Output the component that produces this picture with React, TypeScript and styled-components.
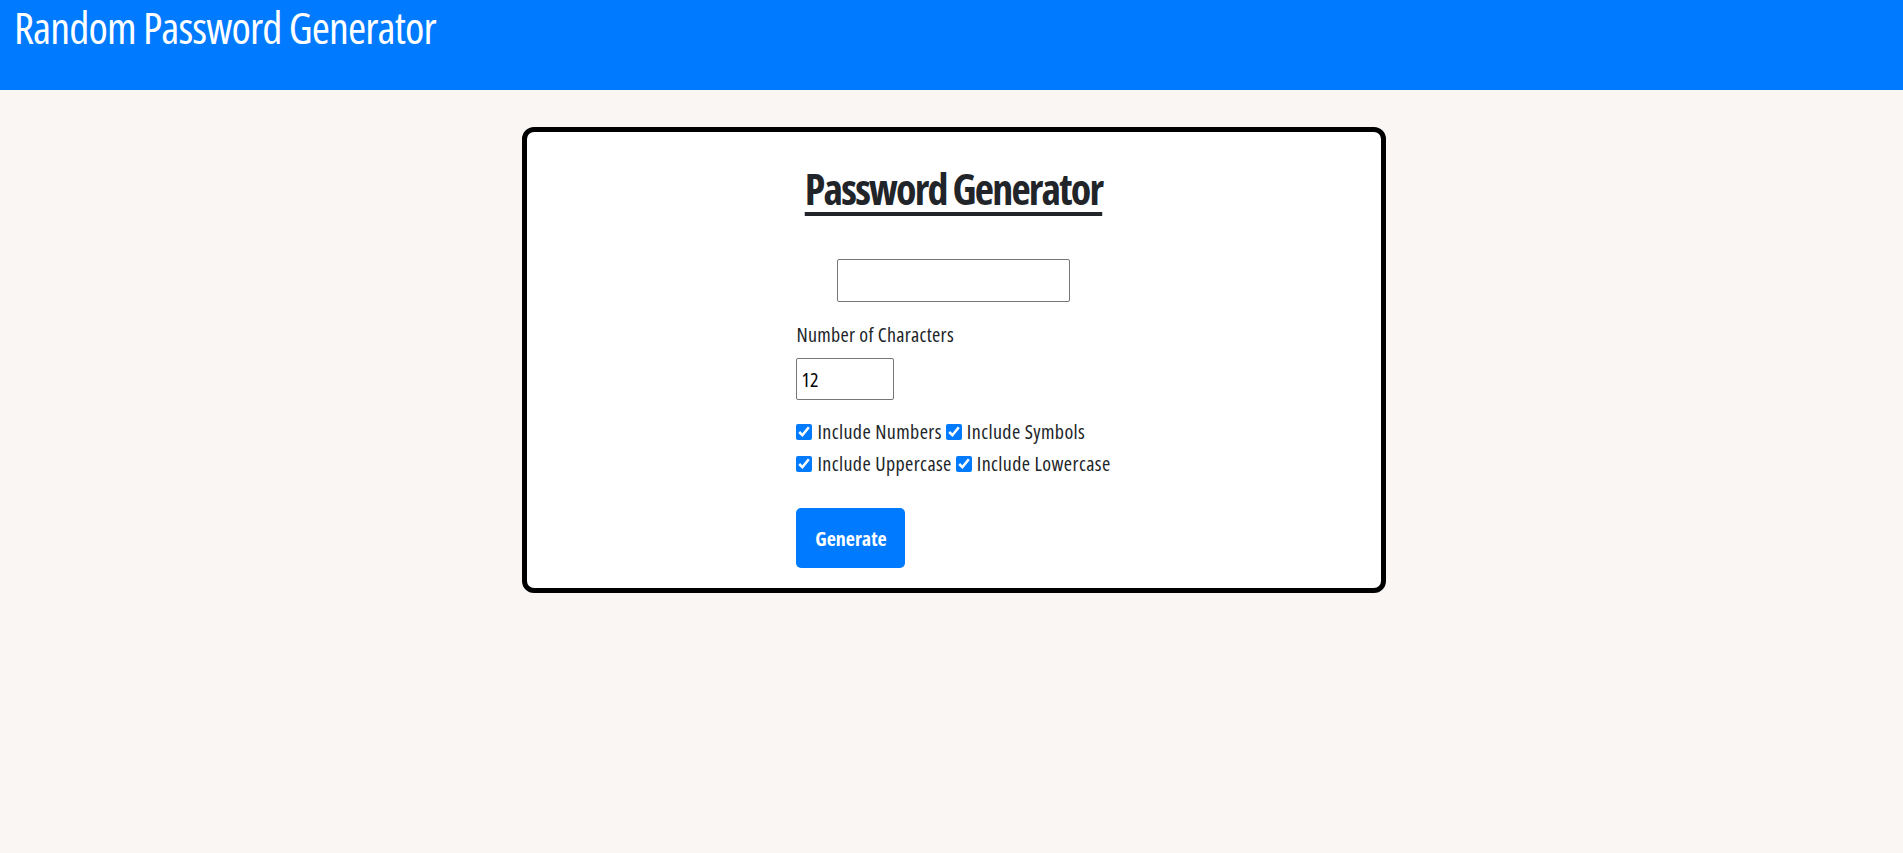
import React from "react";
import styled, { createGlobalStyle } from "styled-components";

const FONT = `"Open Sans", "Roboto", sans-serif`;

const Global = createGlobalStyle`
  html, body { margin: 0; padding: 0; }
  body {
    background: #faf6f3;
    font-family: ${FONT};
    font-stretch: 75%;
    color: #212529;
    min-height: 853px;
  }
`;

const Header = styled.header`
  height: 90px;
  box-sizing: border-box;
  background: #007bff;
  padding: 0 0 0 14px;
`;

const SiteTitle = styled.h1`
  margin: 0;
  font-size: 44px;
  line-height: 54px;
  font-weight: 500;
  font-stretch: 75%;
  color: #ffffff;
  letter-spacing: -0.9px;
`;

const Card = styled.main`
  width: 864px;
  box-sizing: border-box;
  margin: 37px 0 0 calc(50% - 430px);
  background: #ffffff;
  border: 5px solid #000000;
  border-radius: 12px;
  padding: 30px 0 20px;
  display: flex;
  flex-direction: column;
  align-items: center;
`;

const CardTitle = styled.h2`
  margin: 0;
  font-size: 42px;
  line-height: 54px;
  font-weight: 700;
  font-stretch: 75%;
  letter-spacing: -1.8px;
  color: #212529;
  text-decoration: underline;
  text-decoration-thickness: 4px;
  text-underline-offset: 7px;
`;

const Output = styled.input`
  margin-top: 43px;
  width: 233px;
  height: 43px;
  box-sizing: border-box;
  border: 1px solid #767676;
  border-radius: 2px;
  background: #fff;
  font-family: ${FONT};
  font-stretch: 75%;
  font-size: 20px;
  padding: 0 4px;
`;

const Form = styled.div`
  margin-top: 21px;
  display: flex;
  flex-direction: column;
  align-items: flex-start;
  width: fit-content;
`;

const Label = styled.label`
  font-size: 20px;
  line-height: 24px;
  font-weight: 500;
  letter-spacing: 0.3px;
`;

const NumberInput = styled.input`
  margin-top: 11px;
  width: 98px;
  height: 42px;
  box-sizing: border-box;
  border: 1px solid #767676;
  border-radius: 2px;
  font-family: ${FONT};
  font-stretch: 75%;
  font-weight: 500;
  font-size: 20px;
  color: #000;
  padding: 0 4px;
`;

const Options = styled.div`
  margin-top: 20px;
  display: flex;
  flex-direction: column;
  gap: 8px;
`;

const OptionRow = styled.div`
  display: flex;
  align-items: center;
  gap: 4px;
  height: 24px;
`;

const Option = styled.label`
  display: flex;
  align-items: center;
  gap: 5px;
  font-size: 20px;
  line-height: 24px;
  font-weight: 500;
  letter-spacing: 0.4px;
  white-space: nowrap;
`;

const Check = styled.input`
  margin: 0;
  width: 16px;
  height: 16px;
  accent-color: #007bff;
`;

const Button = styled.button`
  margin-top: 32px;
  width: 109px;
  height: 60px;
  border: none;
  border-radius: 5px;
  background: #007bff;
  color: #ffffff;
  font-family: ${FONT};
  font-stretch: 75%;
  font-size: 20px;
  font-weight: 700;
  cursor: pointer;
`;

const rows: string[][] = [
  ["Include Numbers", "Include Symbols"],
  ["Include Uppercase", "Include Lowercase"],
];

export default function App() {
  return (
    <>
      <Global />
      <Header>
        <SiteTitle>Random Password Generator</SiteTitle>
      </Header>
      <Card>
        <CardTitle>Password Generator</CardTitle>
        <Output type="text" readOnly />
        <Form>
          <Label htmlFor="len">Number of Characters</Label>
          <NumberInput id="len" type="number" defaultValue={12} />
          <Options>
            {rows.map((r, i) => (
              <OptionRow key={i}>
                {r.map((t) => (
                  <Option key={t}>
                    <Check type="checkbox" defaultChecked />
                    {t}
                  </Option>
                ))}
              </OptionRow>
            ))}
          </Options>
          <Button>Generate</Button>
        </Form>
      </Card>
    </>
  );
}
